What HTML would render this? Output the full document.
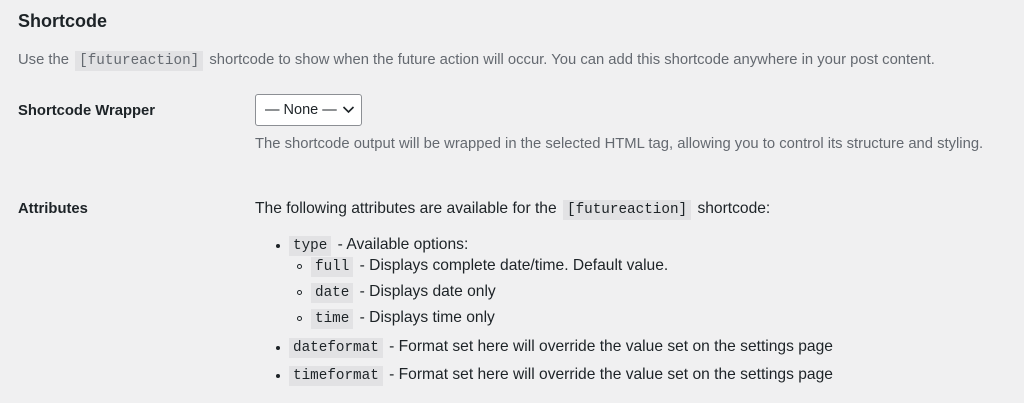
<!DOCTYPE html>
<html><head><style>
body{margin:0;background:#f0f0f1;font-family:"Liberation Sans",sans-serif;font-size:14.8px;color:#1d2327;width:1024px;height:403px;overflow:hidden;position:relative}
.a{position:absolute;white-space:nowrap;line-height:20px}
code{font-family:"Liberation Mono",monospace;font-size:14.3px;background:#e2e2e4;padding:2px 4px;margin:0 2px}
.d{color:#646970}
.l{font-size:15.6px}
.l code{font-size:14.3px}
.b{position:absolute;width:4px;height:4px;border-radius:50%;background:#1d2327}
.c{position:absolute;width:5px;height:5px;border-radius:50%;border:1px solid #1d2327;box-sizing:border-box}
</style></head><body>
<div class="a" style="left:18px;top:11px;font-size:18px;font-weight:bold">Shortcode</div>
<div class="a d" style="left:18px;top:50px">Use the <code>[futureaction]</code> shortcode to show when the future action will occur. You can add this shortcode anywhere in your post content.</div>
<div class="a" style="left:18px;top:101px;font-weight:bold">Shortcode Wrapper</div>
<div style="position:absolute;left:255px;top:94px;width:107px;height:32px;border:1px solid #8c8f94;border-radius:3px;background:#fff;box-sizing:border-box"></div>
<div class="a" style="left:265px;top:100px;font-size:14.5px">— None —</div>
<svg style="position:absolute;left:342px;top:105px" width="13" height="10"><path d="M1.5 2 L6.5 7 L11.5 2" fill="none" stroke="#1d2327" stroke-width="1.6"/></svg>
<div class="a d" style="left:255px;top:134px">The shortcode output will be wrapped in the selected HTML tag, allowing you to control its structure and styling.</div>
<div class="a" style="left:18px;top:199px;font-weight:bold">Attributes</div>
<div class="a l" style="left:255px;top:199px">The following attributes are available for the <code>[futureaction]</code> shortcode:</div>
<div class="b" style="left:276px;top:244px"></div><div class="a l" style="left:287px;top:235px"><code>type</code> - Available options:</div>
<div class="c" style="left:297px;top:264px"></div><div class="a l" style="left:309px;top:256px"><code>full</code> - Displays complete date/time. Default value.</div>
<div class="c" style="left:297px;top:290px"></div><div class="a l" style="left:309px;top:282px"><code>date</code> - Displays date only</div>
<div class="c" style="left:297px;top:316px"></div><div class="a l" style="left:309px;top:308px"><code>time</code> - Displays time only</div>
<div class="b" style="left:276px;top:346px"></div><div class="a l" style="left:287px;top:337px"><code>dateformat</code> - Format set here will override the value set on the settings page</div>
<div class="b" style="left:276px;top:374px"></div><div class="a l" style="left:287px;top:365px"><code>timeformat</code> - Format set here will override the value set on the settings page</div>
</body></html>
